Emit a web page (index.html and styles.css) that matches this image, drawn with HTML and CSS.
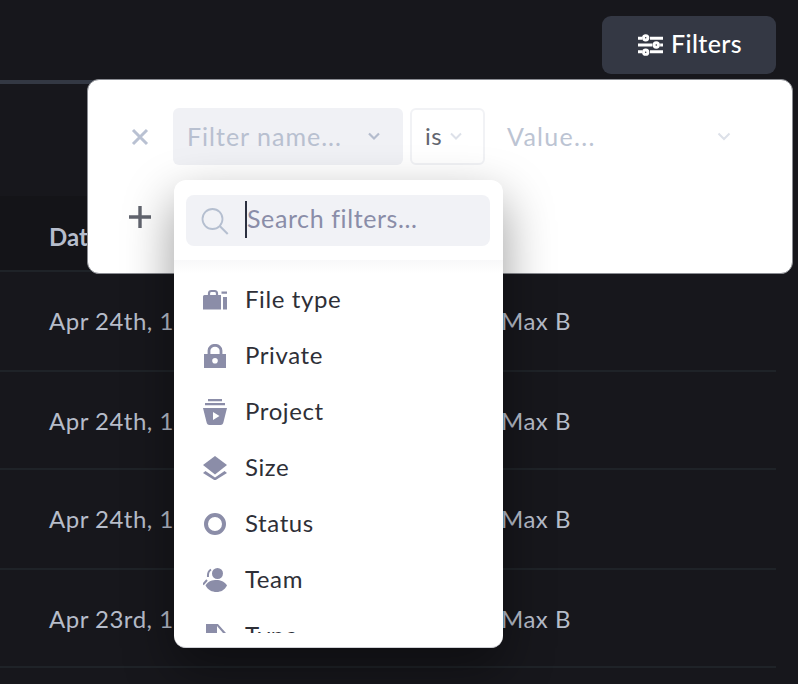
FILE: index.html
```html
<!DOCTYPE html>
<html lang="en">
<head>
<meta charset="utf-8">
<title>Filters</title>
<link rel="stylesheet" href="styles.css">
</head>
<body>
<div class="page">
  <header class="topbar">
    <button class="filters-btn">
      <svg class="filters-icon" viewBox="0 0 26 22" width="25" height="22"><g fill="none" stroke="#fff" stroke-width="3"><path d="M0 4h4.500M12.500 4H26M0 11h15M23 11h3M0 18h4.500M12.500 18H26"/><circle cx="8" cy="3.500" r="2.300"/><circle cx="19" cy="11" r="2.300"/><circle cx="8" cy="18.500" r="2.300"/></g></svg>
      <span class="btn-label">Filters</span>
    </button>
  </header>
  <div class="tabs"><div class="tab-line"></div></div>
  <div class="thead"><span>Date</span><span>Owner</span></div>
  <div class="row"><span>Apr 24th, 10:12 PM</span><span>Max B</span></div>
  <div class="row"><span>Apr 24th, 10:02 PM</span><span>Max B</span></div>
  <div class="row"><span>Apr 24th, 10:00 PM</span><span>Max B</span></div>
  <div class="row"><span>Apr 23rd, 11:45 PM</span><span>Max B</span></div>

  <section class="panel">
    <div class="filter-row">
      <svg class="x-icon" viewBox="0 0 20 20" width="20" height="20"><path d="M3 3l14 14M17 3L3 17" stroke="#b9c1d2" stroke-width="3" fill="none"/></svg>
      <div class="select name"><span class="select-label">Filter name...</span><svg class="chev" viewBox="0 0 14 9" width="14" height="9"><path d="M2 1.500l5 5 5-5" stroke="#b4bccd" stroke-width="2.200" fill="none"/></svg></div>
      <div class="select op"><span class="select-label">is</span><svg class="chev" viewBox="0 0 14 9" width="14" height="9"><path d="M2 1.500l5 5 5-5" stroke="#dde1e9" stroke-width="2" fill="none"/></svg></div>
      <div class="select value"><span class="select-label">Value...</span><svg class="chev" viewBox="0 0 14 9" width="14" height="9"><path d="M1.500 1.500l5.500 5.500 5.500-5.500" stroke="#dde1e9" stroke-width="2" fill="none"/></svg></div>
    </div>
    <svg class="plus-icon" viewBox="0 0 24 24" width="24" height="24"><path d="M12 1v22M1 12h22" stroke="#62656f" stroke-width="3.400" fill="none"/></svg>

    <div class="dropdown">
      <div class="search">
        <svg class="search-icon" viewBox="0 0 28 28" width="28" height="28"><circle cx="11.500" cy="12" r="10" fill="none" stroke="#b5bfd0" stroke-width="1.800"/><path d="M18.700 19l8 8" stroke="#b5bfd0" stroke-width="2" fill="none"/></svg>
        <span class="caret"></span>
        <span class="search-text">Search filters...</span>
      </div>
      <ul class="list">
        <li><svg viewBox="0 0 24 24" width="24" height="24"><path fill="#8b8da8" d="M0 8.500Q0 7 1.500 7H18V21.500H0zM20 9h4v12.500h-4zM18.500 3.500H24v2.200h-5.500z"/><path d="M6 8V5.500Q6 3 8.500 3H11.500Q14 3 14 5.500V8" fill="none" stroke="#8b8da8" stroke-width="2.200"/></svg><span class="item-label">File type</span></li>
        <li><svg viewBox="0 0 24 24" width="24" height="24"><path fill="#8b8da8" fill-rule="evenodd" d="M1 10h22v14H1zM12 14a2.800 2.800 0 1 0 0 5.600a2.800 2.800 0 0 0 0-5.600z"/><path d="M6 11V6.500a6 5.200 0 0 1 12 0V11" fill="none" stroke="#8b8da8" stroke-width="2.800"/></svg><span class="item-label">Private</span></li>
        <li><svg viewBox="0 0 24 26" width="24" height="26"><path fill="#8b8da8" fill-rule="evenodd" d="M5 0h14v2.200H5zM2 4h20v2.200H2zM0 9h24l-3.500 14q-.5 3-3 3H6.500q-2.500 0-3-3zM10 13v8l6.500-4z"/></svg><span class="item-label">Project</span></li>
        <li><svg viewBox="0 0 24 24" width="24" height="24"><path fill="#8b8da8" d="M12 0l12 9-12 9.500L0 9z"/><path fill="#8b8da8" d="M2.500 15L12 21.500 21.500 15l2.500 2L12 24.500 0 17z"/></svg><span class="item-label">Size</span></li>
        <li><svg viewBox="0 0 24 24" width="24" height="24"><circle cx="12" cy="12" r="9" fill="none" stroke="#8b8da8" stroke-width="4"/></svg><span class="item-label">Status</span></li>
        <li><svg viewBox="0 0 24 24" width="24" height="24"><circle cx="14.500" cy="5.500" r="5.500" fill="#8b8da8"/><path fill="#8b8da8" d="M2.500 17.500C5 13 9.500 12 13.500 12s8 1.500 10.500 5.500c-2.500 4.500-6 6.500-10.500 6.500S5 22 2.500 17.500z"/><path d="M8 1.500Q4.500 3.500 5 9M0 16.500L4 12" fill="none" stroke="#8b8da8" stroke-width="2"/></svg><span class="item-label">Team</span></li>
        <li><svg viewBox="0 1 24 24" width="24" height="24"><path fill="#8b8da8" d="M3 0h11l9 10v15H3z"/><path fill="#fff" d="M14 3v7h6z"/></svg><span class="item-label">Type</span></li>
      </ul>
    </div>
  </section>
</div>
</body>
</html>
```
FILE: styles.css
```css
* { box-sizing: border-box; }
html, body { margin: 0; padding: 0; }
body { background: #17171c; font-family: Lato, "Noto Sans", sans-serif; }
.page { position: relative; width: 798px; height: 684px; overflow: hidden; background: #17171c; }

.topbar { display: flex; justify-content: flex-end; height: 80px; padding: 16px 22px 0 0; }
.filters-btn { display: flex; align-items: center; justify-content: center; gap: 8px; width: 174px; height: 58px; padding: 0 0 0 2px; border: 0; border-radius: 9px; background: #343844; color: #fff; font: 500 25px Lato, sans-serif; letter-spacing: .4px; }
.filters-icon { display: block; }
.btn-label { padding-bottom: 5px; }

.tabs { height: 116px; }
.tab-line { width: 300px; height: 4px; background: #333843; }

.thead, .row { display: grid; grid-template-columns: 452px 1fr; width: 776px; padding-left: 49px; align-items: center; }
.thead { height: 76px; padding-top: 7px; background: #141418; color: #b6bdcc; font-size: 24px; font-weight: 700; border-bottom: 2px solid #1f2328; }
.row { color: #b6bcc9; font-size: 24px; letter-spacing: .5px; border-bottom: 2px solid #1f2328; }
.row:nth-child(even) { height: 100px; padding-bottom: 2px; }
.row:nth-child(odd) { height: 98px; }

.panel { position: absolute; left: 87px; top: 79px; width: 706px; height: 195px; background: #fff; border: 1px solid #8a8c92; border-radius: 12px; }
.filter-row { display: flex; align-items: stretch; height: 57px; margin: 28px 0 0 85px; gap: 7px; }
.x-icon { position: absolute; left: 42px; top: 47px; }
.plus-icon { position: absolute; left: 40px; top: 125px; }
.select { display: flex; align-items: center; justify-content: space-between; border-radius: 6px; font-size: 24px; letter-spacing: .4px; }
.select-label { padding-bottom: 2px; }
.name { width: 230px; padding: 0 22px 0 14px; background: #f0f1f5; color: #b8c0d0; font-size: 25px; letter-spacing: 1px; }
.op { width: 75px; padding: 0 20px 0 13px; border: 2px solid #f1f2f5; color: #62656f; }
.value { width: 239px; padding: 0 0 0 15px; color: #bcc4d3; font-size: 25px; letter-spacing: 1.300px; }
.chev { display: block; flex: none; }

.dropdown { position: absolute; left: 86px; top: 100px; width: 329px; height: 468px; background: #fff; border-radius: 12px; box-shadow: 0 20px 50px rgba(0, 0, 0, .4); border-bottom: 1px solid #d0d1d6; overflow: hidden; }
.search { position: relative; display: flex; align-items: center; height: 51px; margin: 15px 13px 14px 12px; padding-left: 15px; background: #f1f2f6; border-radius: 8px; color: #8a8da8; font-size: 25px; letter-spacing: .6px; }
.search-icon { display: block; flex: none; margin-right: 18px; }
.caret { position: absolute; left: 59px; top: 6px; width: 2px; height: 37px; background: #2b3040; }
.search-text { white-space: nowrap; padding-bottom: 6px; }
.list { list-style: none; margin: 0; padding: 12px 0 0; height: 373px; overflow: hidden; background: linear-gradient(#f8f8f9, #fff 14px); }
.list li { display: flex; align-items: center; height: 56px; padding-left: 29px; gap: 18px; color: #2e2f37; font-size: 24px; letter-spacing: .6px; }
.list svg { display: block; flex: none; }
.item-label { padding-bottom: 4px; }
```
